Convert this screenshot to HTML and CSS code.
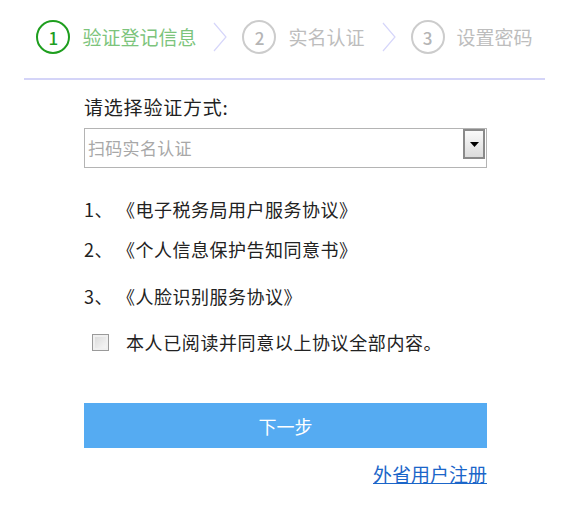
FILE: index.html
```html
<!DOCTYPE html>
<html lang="zh-CN">
<head>
  <meta charset="UTF-8">
  <meta name="viewport" content="width=device-width, initial-scale=1.0">
  <title>实名认证</title>
  <link rel="stylesheet" href="styles.css">
</head>
<body>
  <div class="steps">
    <div class="step active">
      <span class="num">1</span>
      <span class="label">验证登记信息</span>
    </div>
    <svg class="chevron" width="14" height="30" viewBox="0 0 14 30"><path d="M1 1 L13 15 L1 29" fill="none" stroke="#d6d6fa" stroke-width="1.2"/></svg>
    <div class="step">
      <span class="num">2</span>
      <span class="label">实名认证</span>
    </div>
    <svg class="chevron" width="14" height="30" viewBox="0 0 14 30"><path d="M1 1 L13 15 L1 29" fill="none" stroke="#d6d6fa" stroke-width="1.2"/></svg>
    <div class="step">
      <span class="num">3</span>
      <span class="label">设置密码</span>
    </div>
  </div>

  <div class="form">
    <div class="field-label">请选择验证方式:</div>
    <div class="select">
      <span class="placeholder">扫码实名认证</span>
      <span class="drop">
        <svg width="9" height="5" viewBox="0 0 9 5"><path d="M0 0 H9 L4.5 5 Z" fill="#000"/></svg>
      </span>
    </div>

    <ul class="agreements">
      <li>1、&thinsp;《电子税务局用户服务协议》</li>
      <li>2、&thinsp;《个人信息保护告知同意书》</li>
      <li class="gap">3、&thinsp;《人脸识别服务协议》</li>
    </ul>

    <label class="agree">
      <span class="box"></span>
      本人已阅读并同意以上协议全部内容。
    </label>

    <button class="next">下一步</button>
    <div class="links"><a href="#">外省用户注册</a></div>
  </div>
</body>
</html>
```

FILE: styles.css
```css
body {
  margin: 0;
  font-family: "Noto Sans CJK SC", "Noto Sans", sans-serif;
  color: #222;
  background: #fff;
}
.steps {
  display: flex;
  align-items: center;
  justify-content: center;
  margin: 0 22px 0 24px;
  padding: 20px 0 24px;
  border-bottom: 2px solid #d4d4f8;
}
.step {
  display: flex;
  align-items: center;
  gap: 12px;
  color: #bdbdbd;
}
.num {
  width: 30px;
  height: 30px;
  border: 2px solid #cccccc;
  border-radius: 50%;
  display: flex;
  align-items: center;
  justify-content: center;
  font-size: 17px;
  font-weight: 500;
  color: #b5b5b5;
}
.label {
  font-size: 19px;
  line-height: 24px;
}
.step.active .num {
  border-color: #1e9e1e;
  color: #1e9e1e;
}
.step.active .label {
  color: #7cc47c;
}
.chevron {
  margin: 0 15px 0 17px;
}
.form {
  width: 403px;
  margin: 15px 0 0 84px;
}
.field-label {
  font-size: 19px;
  line-height: 24px;
  letter-spacing: 0.8px;
  color: #222;
}
.select {
  display: flex;
  justify-content: space-between;
  height: 38px;
  margin-top: 9px;
  border: 1px solid #b4b4b4;
}
.placeholder {
  font-size: 17px;
  line-height: 38px;
  padding-left: 3px;
  letter-spacing: 0.3px;
  color: #a8a8a8;
}
.drop {
  width: 18px;
  height: 26px;
  margin: 0 1px;
  border: 2px solid #8a8a8a;
  background: linear-gradient(#fafafa, #dcdcdc);
  display: flex;
  align-items: center;
  justify-content: center;
}
.agreements {
  list-style: none;
  margin: 29px 0 0;
  padding: 0;
  font-size: 18px;
  line-height: 24px;
  letter-spacing: 0.5px;
}
.agreements li {
  margin-bottom: 16px;
}
.agreements li.gap {
  margin-top: 23px;
  margin-bottom: 0;
}
.agree {
  display: flex;
  align-items: center;
  margin-top: 22px;
  padding-left: 8px;
  font-size: 18px;
  line-height: 24px;
  letter-spacing: 0.6px;
}
.box {
  width: 15px;
  height: 15px;
  margin-right: 17px;
  border: 1px solid #9a9a9a;
  background: linear-gradient(135deg, #d8d8d8, #fafafa);
  box-shadow: inset 0 0 0 2px #f0f0f0;
}
.next {
  display: block;
  width: 100%;
  height: 45px;
  margin-top: 49px;
  border: none;
  background-color: #55abf2;
  color: #fff;
  font-family: inherit;
  font-size: 18px;
}
.links {
  text-align: right;
  margin-top: 14px;
  font-size: 19px;
  line-height: 24px;
}
.links a {
  color: #1b66c9;
}
```
